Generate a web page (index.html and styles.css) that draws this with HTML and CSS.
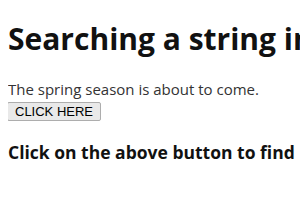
FILE: index.html
```html
<!DOCTYPE html>
<html lang="en">

<head>
  <meta charset="UTF-8" />
  <title>Searching a string in JavaScript</title>
  <link rel="stylesheet" href="styles.css">
</head>

<body>

  <h1>Searching a string in</h1>

  <p class="texto">The spring season is about to come.</p>
  <button class="botao">CLICK HERE</button>

  <h3 id="resultado">Click on the above button to find</h3>

</body>

</html>
```

FILE: styles.css
```css
html {
  overflow: hidden;
}

body {
  margin: 8px 0 8px 8px;
  font-family: "Open Sans", sans-serif;
  color: #111;
  white-space: nowrap;
}

h1 {
  font-size: 30px;
  margin: 10px 0 20px 0;
}

.texto {
  margin: 16px 0 0 0;
  font-size: 15px;
  color: #333;
}

.botao {
  font-family: "Liberation Sans", Arial, sans-serif;
  font-size: 13px;
  background-color: #e9e9e9;
  border: 1px solid #adadad;
  border-radius: 2px;
  padding: 1px 7px;
  margin-left: -1px;
  color: #000;
}

h3 {
  font-size: 17.5px;
  margin: 19px 0;
}
```
